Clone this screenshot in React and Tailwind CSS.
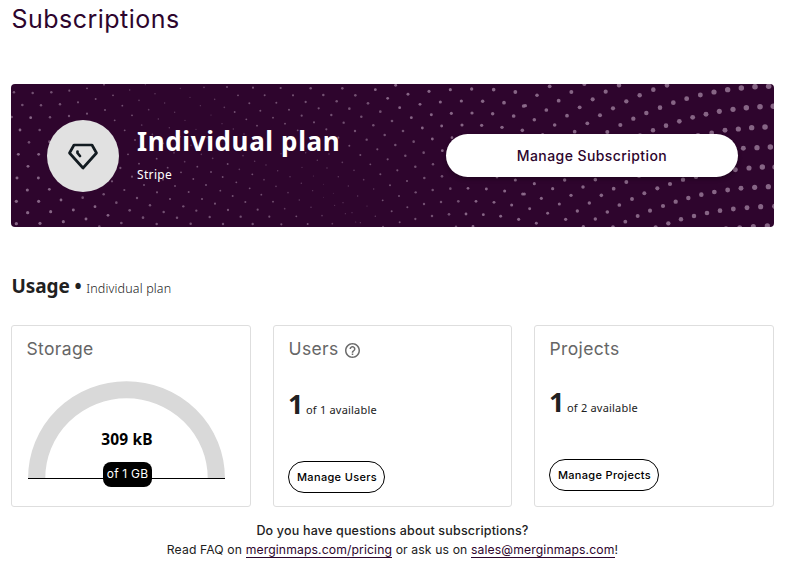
import React from "react";

// Halftone dots of the banner, as [x, y, radius] in thirds of a pixel.
const DOTS_LEFT = [
  [42,277,4],[98,279,4],[154,277,4],[208,272,3.5],[261,265,3],[312,254,3],[67,315,4.2],[123,316,4],[180,313,4],[234,307,3.5],[287,297,3.2],[339,286,3],[389,270,2.5],[436,254,2],
  [35,351,4.2],[92,353,4.5],[150,352,4],[207,348,3.8],[261,341,3.5],[315,330,3.3],[367,317,3],[417,301,2.7],[465,281,2.5],
  [60,390,4.5],[119,390,4.2],[148,425,4.2],[87,427,4.2],[344,361,3],[396,346,3],[446,329,2.8],[494,309,2.3],[541,265,2.2],
  [55,463,4.7],[116,463,4.5],[84,499,4.7],[51,534,4.8],[115,534,4.7],[82,570,5],[148,568,4.5],[49,604,5.2],[116,604,5],[183,600,4.5],[248,593,4.2],[311,583,4],[373,570,3.5],
  [83,638,5.3],[152,635,5],[220,630,4.8],[285,620,4.5],[349,608,4.2],[411,594,3.8],[471,577,3.5],
  [49,671,5.3],[120,670,5],[190,665,5],[258,657,4.7],[324,646,4.5],[389,631,4.3],[450,616,4],[510,597,3.5],[566,576,3.2],[298,680,4.3],[364,669,4.3],[429,653,4.2],[491,636,4],[550,619,3.8],[606,597,3.5],[661,572,3],
  [470,672,4],[531,653,4],[589,632,3.7],[645,611,3.4],[698,588,3.2],[749,565,3],[572,671,4],[629,651,3.8],[684,630,3.7],[736,606,3.3],
  [669,672,3.8],[722,650,3.8],[773,629,3.5],[758,672,3.8],
  [374,391,3],[425,375,2.8],[475,357,2.5],[524,337,2.3],[570,292,2],[405,420,3],[457,403,2.8],[508,383,2.4],[555,361,2],[601,317,2],
  [384,463,3],[437,448,3],[490,430,2.7],[541,410,2.4],[588,388,2],[633,345,2],[361,504,3.7],[417,491,3],[470,476,3],[522,458,2.8],[573,436,2.6],[621,413,2.2],[666,371,2],
  [336,544,3.7],[396,530,3.5],[452,517,3],[503,503,3],[554,485,2.8],[604,463,2.6],[654,441,2.4],[432,555,3.2],[489,539,3],[543,517,3],[592,500,3],[638,475,2.8],[687,451,2.5],
  [525,558,3],[580,537,3],[633,516,3],[683,492,3],[729,467,2.6],[618,555,3.2],[668,531,3],[718,508,2.7],[764,484,2.5],[709,547,3],[757,523,3],[784,584,3],
  [612,262,2.8],[681,261,3],[759,263,3.5],[644,298,2.6],[714,286,3],[673,322,2.8],[748,310,3.2],[704,336,3],[781,332,3.2],[739,358,3],[700,387,2.4],[771,377,3],[732,402,2.5],[768,421,2.5],
];
const DOTS_MIDDLE = [
  [8,58,3.2],[56,36,3.5],[93,58,3.5],[146,37,4],[184,57,4],[241,37,4.2],[280,58,4.2],[340,41,4.5],[401,28,4.8],[438,55,4.8],[501,46,5],[565,41,5],[629,39,5.3],[695,41,5.8],[760,48,6.2],
  [43,80,3.2],[131,78,3.7],[224,76,4],[318,82,4.3],[377,67,4.5],[474,85,4.7],[535,78,5],[598,75,5.2],[662,76,5.6],[726,80,6],[785,90,6],
  [81,101,3.3],[170,97,3.6],[262,98,4.2],[355,107,4.3],[413,95,4.6],[508,116,4.8],[568,112,5],[630,111,5.2],[692,113,5.6],[755,120,6],
  [33,125,3],[119,119,3.5],[208,117,3.8],[298,122,4],[390,135,4.3],[448,125,4.6],[539,150,4.6],[600,147,5],[659,148,5.2],[720,154,5.5],[781,163,5.8],
  [69,143,3],[156,139,3.4],[245,140,3.8],[334,148,4],[423,165,4.2],[481,156,4.5],[570,185,4.4],[107,163,3],[193,160,3.4],[279,165,3.8],[368,177,4],[455,197,4.2],[511,189,4.5],
  [229,185,3.4],[314,191,3.8],[400,207,4],[485,230,4.2],[541,224,4.4],[262,209,3.2],[346,220,3.5],[430,239,4],[513,265,4],[295,237,3.2],[377,250,3.5],[460,272,4],[540,301,4.2],
  [57,233,2],[93,211,2.5],[131,230,2.5],[166,253,2.5],[201,234,2.6],[241,259,2.8],[325,265,3],[406,283,3.5],[487,306,4],[565,338,4.2],[12,267,2.3],[47,284,2.4],[84,302,2.4],[120,274,2],[154,300,1.7],[195,276,2.3],[229,302,2.4],[276,283,2.6],[355,295,3.3],[435,315,3.5],[512,342,4],
  [6,311,2.8],[42,331,2.8],[78,350,2.6],[118,322,2.4],[152,344,2],[185,325,1.5],[214,352,1.6],[185,364,1.5],[259,330,2.2],[305,311,2.7],[287,360,2.2],[335,339,2.5],[384,328,3.3],[461,349,3.8],[537,378,4],[589,376,4.3],[618,337,4.4],[673,339,4.7],[728,345,5],[705,303,4.5],[760,312,5],[782,354,5],
  [33,377,3],[68,398,2.8],[112,372,2.6],[147,394,2.4],[22,422,3.5],[58,445,3.5],[103,421,3],[137,444,3.2],[180,419,2.6],[211,443,2.8],[218,388,1.8],[243,380,2],[250,413,1.8],[270,410,1.8],[281,438,2],[295,440,2],[315,390,2],[362,373,3],[340,421,2.5],[389,406,3.2],[411,360,3.2],[436,394,3.3],[413,439,3.2],[363,452,3],[486,384,3.8],[460,429,3.7],[510,420,4],[561,415,4.3],[612,414,4.5],[642,376,4.5],[664,416,4.6],[696,379,4.7],[716,421,4.8],[749,387,5],[770,430,5],[582,452,4],[633,451,4.5],
];
const DOTS_RIGHT = [
  [77,31,6],[142,48,6.4],[181,24,6.6],[245,47,6.8],[285,28,7],[347,58,7.2],[388,41,7.4],[429,28,7.4],[488,68,7.8],[529,57,8],[570,48,8.4],[611,41,8.7],[652,36,8.8],[693,32,9],[734,31,9],
  [39,58,5.7],[104,74,6.2],[206,70,6.6],[307,76,7],[408,95,7.4],[448,80,7.6],[546,115,8],[586,106,8.2],[627,100,8.4],[667,95,8.8],[708,92,9],[748,91,9],
  [4,89,5.5],[67,102,6],[167,94,6.3],[267,97,6.8],[367,111,7.2],[466,136,7.6],[506,124,7.8],[563,171,7.8],[603,163,8],[643,159,8.4],[683,155,8.7],[723,153,9],
  [31,131,5.7],[129,119,6],[228,118,6.5],[328,128,7],[426,149,7.4],[92,147,5.8],[190,142,6.2],[289,147,6.7],[387,163,7.2],[56,176,5.5],[152,167,6],[250,168,6.5],[348,178,7],[522,178,7.5],
  [658,217,8],[699,215,8.5],[739,213,8.8],[634,281,8],[675,276,8.3],[715,273,8.7],[753,273,8.8],
  [31,323,5],[122,312,5.5],[214,311,5.8],[307,318,6.3],[345,300,6.6],[477,311,7],[516,302,7.2],[438,324,6.8],[86,338,5.2],[177,333,5.6],[269,338,6],[400,337,6.6],[361,352,6.4],[324,369,6.3],[286,387,6],[250,408,5.8],[214,429,5.6],[178,452,5.5],
  [52,367,5],[141,358,5.4],[232,358,5.8],[196,381,5.5],[160,405,5.4],[125,430,5.2],[106,384,5],[71,412,4.8],[37,442,4.8],[17,398,4.8],[1,354,5],
  [611,342,7.8],[651,337,8],[692,334,8.3],[733,332,8.5],[571,348,7.6],[532,356,7.4],[493,366,7.2],[455,377,7],[417,390,6.8],[378,404,6.6],[341,420,6.4],[304,437,6.2],[267,453,6],
  [752,391,8.4],[710,392,8.3],[669,395,8],[628,399,7.8],[588,404,7.6],[549,411,7.4],[510,420,7.3],[471,430,7.2],[433,442,7],[395,454,6.8],[730,450,8.5],[688,452,8.2],[647,455,8],[606,458,7.8],
];

function Dots({ dots, dx, dy }) {
  return (
    <g transform={`translate(${dx} ${dy})`}>
      {dots.map(([x, y, r], i) => (
        <circle key={i} cx={x} cy={y} r={r * 0.93} fillOpacity={r < 3 ? 0.5 : r < 4.4 ? 0.7 : 0.9} />
      ))}
    </g>
  );
}

function Card({ title, icon, children }) {
  return (
    <section className="h-[182px] rounded-[3px] border border-[#dedede] px-[14px] pt-[11px]">
      <h3 className="flex h-6 items-center pl-[0.5px] font-['Inter',sans-serif] text-[17.5px] leading-6 font-[380] tracking-[0.36px] text-[#666]">
        {title}
        {icon}
      </h3>
      {children}
    </section>
  );
}

function Count({ used, total }) {
  return (
    <p className="flex items-baseline leading-9 text-[#212121]">
      <b className="w-[18px] text-[27px]">{used}</b>
      <span className="text-[11px] tracking-[0.2px]">of {total} available</span>
    </p>
  );
}

const outline =
  "flex h-8 items-center justify-center rounded-full border border-black pt-px pl-px font-['Inter',sans-serif] text-[11px] font-medium tracking-[0.33px] text-black";

export default function App() {
  return (
    <main className="h-[566px] overflow-hidden bg-white pr-[13px] pl-[11px] font-['Noto_Sans',sans-serif]">
      <h1 className="h-[84px] pt-[3px] pl-[0.5px] font-['Inter',sans-serif] text-[25px] leading-8 font-[440] tracking-[0.48px] text-[#2d052d]">
        Subscriptions
      </h1>

      <section className="relative h-[143px] overflow-hidden rounded-[4px] bg-[#2e052d]">
        <svg className="absolute inset-0" width="763" height="143" viewBox="33 252 2289 429" fill="#90708f">
          <Dots dots={DOTS_LEFT} dx={0} dy={0} />
          <Dots dots={DOTS_MIDDLE} dx={786} dy={228} />
          <Dots dots={DOTS_RIGHT} dx={1572} dy={228} />
        </svg>
        <div className="relative flex h-full items-center pr-9 pl-9">
          <div className="flex size-[72px] items-center justify-center rounded-full bg-[#e1e1e1]">
            <svg width="32" height="28" viewBox="0 0 32 28" fill="none" stroke="#121b21" strokeWidth="2.7" strokeLinejoin="round" strokeLinecap="round">
              <path d="M7 3H25L29.5 11L16 26L2.5 11Z" />
              <path d="M10.5 9.5V11L13 14" />
            </svg>
          </div>
          <div className="ml-[18px] flex-1 text-white">
            <h2 className="-mt-[4px] text-[26px] leading-[36px] font-bold tracking-[0.62px]">Individual plan</h2>
            <p className="mt-[6px] text-[12px] leading-5 tracking-[0.35px]">Stripe</p>
          </div>
          <button className="h-[43px] w-[292px] rounded-full bg-white font-['Inter',sans-serif] text-[14px] font-[460] tracking-[0.42px] text-[#2d052d] shadow-[0_2px_4px_rgba(0,0,0,0.3)]">
            Manage Subscription
          </button>
        </div>
      </section>

      <h2 className="flex h-[98px] items-baseline pt-[45px] pl-[0.5px] text-[#212121]">
        <b className="text-[19px] leading-7 tracking-[-0.08px]">Usage •</b>
        <span className="ml-[4.5px] text-[12.5px] font-light tracking-[0.15px]">Individual plan</span>
      </h2>

      <div className="grid grid-cols-[240px_239px_240px] gap-x-[22px]">
        <Card title="Storage">
          <div className="relative mt-[19px] ml-[2px] h-[108px] w-[197px]">
            <svg width="197" height="100" viewBox="0 0 197 100">
              <path d="M8.7 98A89.8 88.3 0 0 1 188.3 98" fill="none" stroke="#d9d9d9" strokeWidth="17.2" />
              <path d="M0 98.5H197" stroke="#000" />
            </svg>
            <b className="absolute inset-x-0 top-[47px] pl-px text-center text-[15.5px] leading-6 tracking-[0.2px] text-black">309 kB</b>
            <span className="absolute top-[82px] left-[75px] h-[25px] w-[49px] rounded-[8px] bg-black text-center font-['Inter',sans-serif] text-[12px] leading-[24px] tracking-[0.2px] text-white">
              of 1 GB
            </span>
          </div>
        </Card>
        <Card
          title="Users"
          icon={
            <svg className="mt-[3px] ml-[6px]" width="15" height="15" viewBox="2 2 20 20" fill="#6b6b6b">
              <path d="M11 18h2v-2h-2v2zm1-16C6.48 2 2 6.48 2 12s4.48 10 10 10 10-4.48 10-10S17.52 2 12 2zm0 18c-4.41 0-8-3.59-8-8s3.59-8 8-8 8 3.59 8 8-3.59 8-8 8zm0-14c-2.21 0-4 1.79-4 4h2c0-1.1.9-2 2-2s2 .9 2 2c0 2-3 1.75-3 5h2c0-2.25 3-2.5 3-5 0-2.21-1.79-4-4-4z" />
            </svg>
          }
        >
          <div className="mt-[25px]"><Count used={1} total={1} /></div>
          <button className={`${outline} mt-[33px] w-[97px]`}>Manage Users</button>
        </Card>
        <Card title="Projects">
          <div className="mt-[23px]"><Count used={1} total={2} /></div>
          <button className={`${outline} mt-[33px] w-[110px]`}>Manage Projects</button>
        </Card>
      </div>

      <footer className="pt-[14px] text-center font-['Inter',sans-serif] leading-[19px] text-[#212121]">
        <p className="text-[12.5px] font-medium tracking-[0.19px]">Do you have questions about subscriptions?</p>
        <p className="text-[12.2px] tracking-[0.12px]">
          Read FAQ on <a className="border-b border-[#2d052d] text-[#2d052d]">merginmaps.com/pricing</a> or ask us on{" "}
          <a className="border-b border-[#2d052d] text-[#2d052d]">sales@merginmaps.com</a>!
        </p>
      </footer>
    </main>
  );
}
